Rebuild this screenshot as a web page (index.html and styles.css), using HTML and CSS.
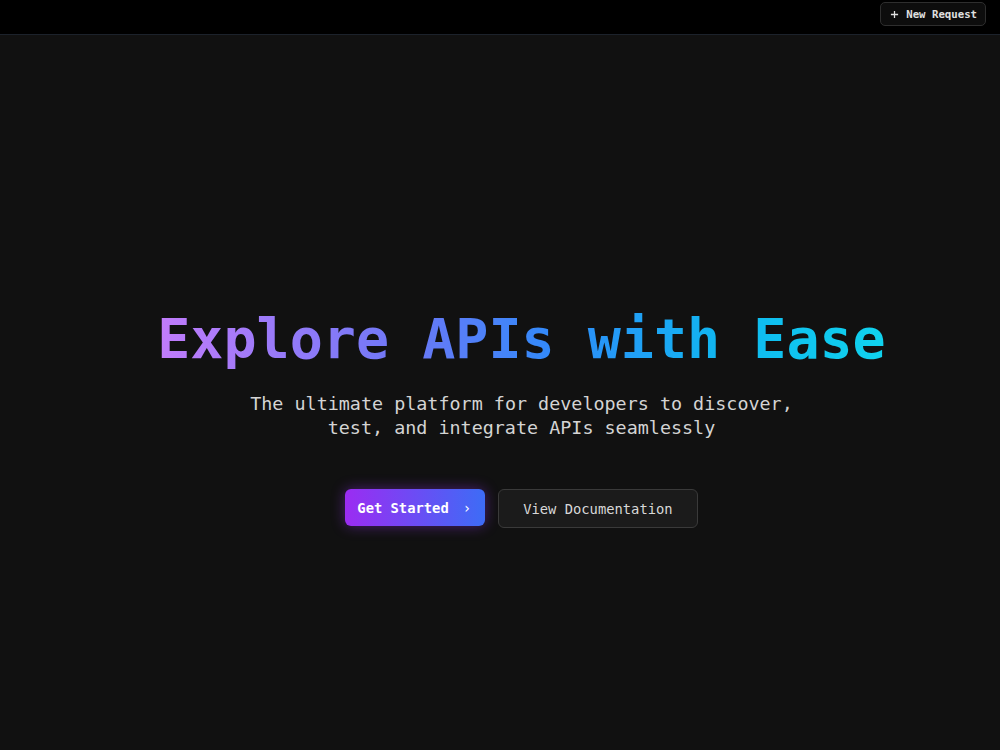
FILE: index.html
```html
<!DOCTYPE html>
<html lang="en">
<head>
<meta charset="utf-8">
<title>Explore APIs with Ease</title>
<link rel="stylesheet" href="styles.css">
</head>
<body>
<header class="topbar">
  <button class="new-request">
    <svg class="plus" viewBox="0 0 10 10" width="9" height="9"><path d="M5 1v8M1 5h8" stroke="currentColor" stroke-width="1.4" fill="none"/></svg>
    <span>New Request</span>
  </button>
</header>
<main class="hero">
  <h1 class="title">Explore APIs with Ease</h1>
  <p class="subtitle">The ultimate platform for developers to discover,<br>test, and integrate APIs seamlessly</p>
  <div class="actions">
    <button class="btn btn-primary">Get Started <span class="chev">›</span></button>
    <button class="btn btn-secondary">View Documentation</button>
  </div>
</main>
</body>
</html>
```

FILE: styles.css
```css
* { box-sizing: border-box; }
html, body { margin: 0; padding: 0; }
body {
  background: #111111;
  font-family: "DejaVu Sans Mono", "Liberation Mono", monospace;
  color: #e5e5e5;
  height: 750px;
  overflow: hidden;
}
.topbar {
  height: 35px;
  background: #000;
  border-bottom: 1px solid #1c222b;
  display: flex;
  justify-content: flex-end;
  align-items: flex-start;
  padding: 2px 14px 0 0;
}
.new-request {
  display: flex;
  align-items: center;
  gap: 7px;
  height: 24px;
  padding: 0 8px 0 9px;
  background: #0d0d0d;
  border: 1px solid #2e2e2e;
  border-radius: 5px;
  color: #e0e0e0;
  font-family: inherit;
  font-size: 10.7px;
  font-weight: bold;
}
.plus { display: block; }
.hero {
  display: flex;
  flex-direction: column;
  align-items: center;
  padding-top: 272px;
  padding-left: 43px;
}
.title {
  margin: 0;
  font-size: 55px;
  line-height: 64px;
  font-weight: bold;
  background: linear-gradient(90deg, #c27cfb 0%, #6a78f6 35%, #2f8bfa 55%, #0fb8f0 78%, #10d3ee 100%);
  -webkit-background-clip: text;
  background-clip: text;
  color: transparent;
}
.subtitle {
  margin: 21px 0 0;
  font-size: 18.4px;
  line-height: 24px;
  text-align: center;
  color: #d4d4d4;
}
.actions {
  display: flex;
  align-items: flex-start;
  gap: 13px;
  margin-top: 49px;
}
.btn {
  font-family: inherit;
  font-size: 13.8px;
  border-radius: 6px;
  cursor: pointer;
}
.btn-primary {
  height: 37px;
  padding: 0 14px 0 12px;
  border: none;
  color: #fff;
  font-weight: bold;
  background: linear-gradient(90deg, #9b2cf2 0%, #3d6cf6 100%);
  box-shadow: 0 0 14px rgba(147, 51, 234, 0.45);
  display: flex;
  align-items: center;
  gap: 0;
}
.chev {
  margin-left: 14px;
  font-weight: normal;
  font-size: 14px;
}
.btn-secondary {
  height: 39px;
  padding: 0 24px;
  background: #1b1b1b;
  border: 1px solid #3a3a3a;
  color: #d8d8d8;
}
```
